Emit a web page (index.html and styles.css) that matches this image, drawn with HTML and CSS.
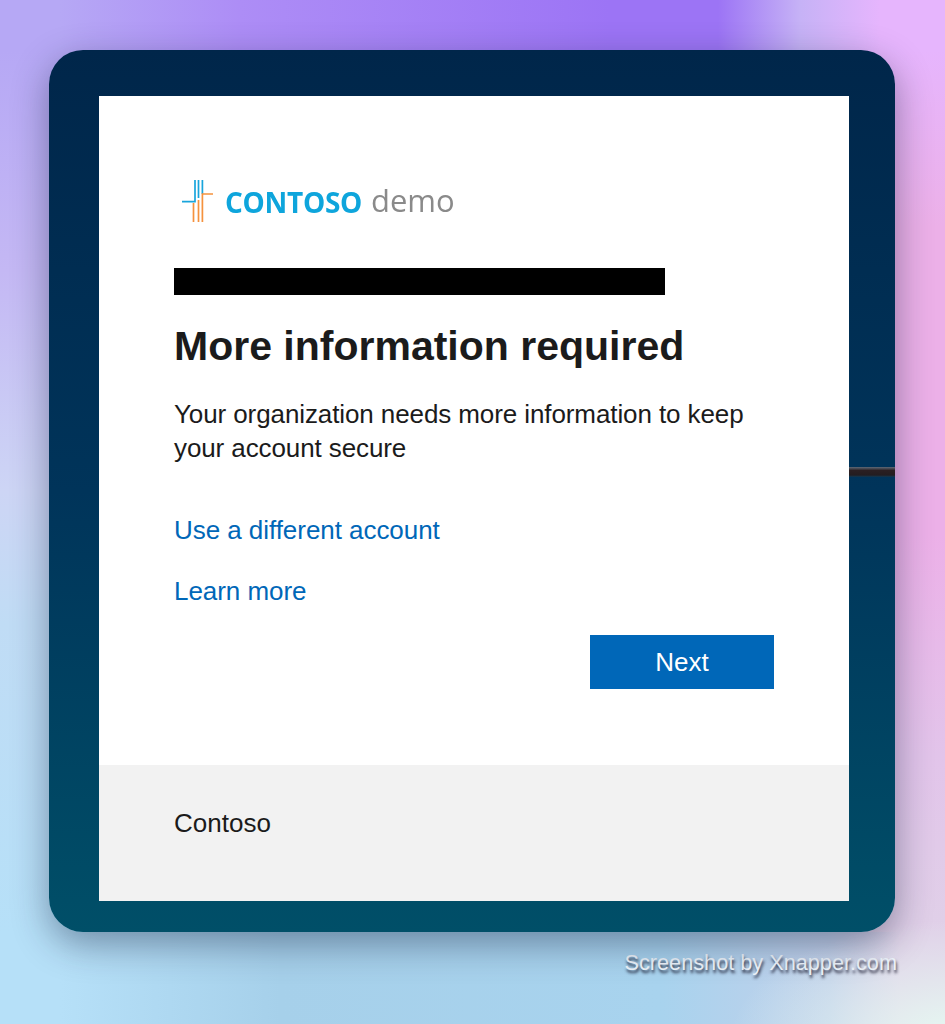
FILE: index.html
```html
<!DOCTYPE html>
<html lang="en">
<head>
<meta charset="utf-8">
<title>More information required</title>
<link rel="stylesheet" href="styles.css">
</head>
<body>
<main class="page">
  <section class="window">
    <div class="streak"></div>
    <div class="card">
      <div class="content">
        <div class="logo">
          <svg class="logo-mark" width="32" height="43" viewBox="0 0 32 43" fill="none" stroke-width="1.7">
            <path d="M0 21.7H13V0M16.5 0V18M20.4 0V14" stroke="#19a5dc"/>
            <path d="M31 14H20.4V42M16.5 42V20M11.5 42V23" stroke="#f5923e"/>
          </svg>
          <span class="logo-brand">CONTOSO</span>
          <span class="logo-demo">demo</span>
        </div>
        <div class="redaction"></div>
        <h1 class="title">More information required</h1>
        <p class="desc">Your organization needs more information to keep your account secure</p>
        <a class="link link-first" href="#">Use a different account</a>
        <a class="link link-second" href="#">Learn more</a>
        <div class="actions"><button class="next" type="button">Next</button></div>
      </div>
      <footer class="foot">Contoso</footer>
    </div>
  </section>
  <div class="credit">Screenshot by Xnapper.com</div>
</main>
</body>
</html>
```
FILE: styles.css
```css
* { box-sizing: border-box; }
html, body { margin: 0; padding: 0; height: 100%; }
body {
  font-family: "Liberation Sans", Arial, sans-serif;
  overflow: hidden;
}
.page {
  width: 945px;
  height: 1024px;
  padding: 50px 50px 0 49px;
  display: flex;
  flex-direction: column;
  background-color: #c0c8f5;
  background-repeat: no-repeat;
  background-image:
    radial-gradient(ellipse 230px 120px at 960px 1040px, #e6faf2 0%, rgba(230,250,242,0) 100%),
    linear-gradient(90deg, #b6a8f5 0, #b6a8f5 60px, #ad8df6 240px, #9c74f5 610px, #9c74f5 718px, #c6b2f6 800px, #e6b5fd 880px),
    linear-gradient(90deg, #b6e0f8 0, #b6e0f8 60px, #a6d0ea 280px, #a8d3ee 660px, #c2d0ea 830px, #e0d0e8 900px),
    linear-gradient(180deg, #e6b5fd 0%, #ecb0e8 20%, #ecb0e8 55%, #e2c4ea 80%, #e0d0e8 100%),
    linear-gradient(180deg, #b6a8f5 0%, #c4b8f4 25%, #cdd5f5 50%, #c0dcf5 65%, #b6e0f8 100%);
  background-size: 100% 100%, 945px 50px, 945px 92px, 100px 882px, 100px 882px;
  background-position: 0 0, 0 0, 0 932px, 845px 50px, 0 50px;
}
.window {
  position: relative;
  width: 846px;
  height: 882px;
  flex: none;
  padding: 46px 46px 31px 50px;
  border-radius: 34px;
  background: linear-gradient(180deg, #00264a 0%, #00345a 50%, #004f68 100%);
  box-shadow: 0 12px 36px rgba(20, 30, 60, 0.42);
}
.streak {
  position: absolute;
  right: 0;
  top: 417px;
  width: 46px;
  height: 10px;
  background: linear-gradient(180deg, #5e6a78 0%, #2a1f22 35%, #241d20 80%, #103a55 100%);
}
.card {
  position: relative;
  height: 805px;
  background: #fff;
  display: flex;
  flex-direction: column;
}
.content {
  flex: 1;
  padding: 84px 75px 0;
  display: flex;
  flex-direction: column;
  align-items: flex-start;
}
.logo {
  display: flex;
  align-items: center;
  height: 43px;
  padding-left: 8px;
  filter: blur(0.45px);
}
.logo-mark { margin-right: 11px; flex: none; }
.logo-brand {
  font-family: "Open Sans", sans-serif;
  font-weight: 700;
  font-size: 28px;
  color: #0ea5dc;
  letter-spacing: -0.3px;
}
.logo-demo {
  font-family: "Open Sans", sans-serif;
  font-size: 31px;
  line-height: 41px;
  color: #8a8a8a;
  margin-left: 9px;
  margin-bottom: 2px;
}
.redaction {
  width: 491px;
  height: 27px;
  margin-top: 45px;
  background: #000;
}
.title {
  margin: 27px 0 0;
  font-size: 41px;
  line-height: 48px;
  font-weight: 700;
  color: #1b1b1b;
}
.desc {
  width: 600px;
  margin: 27px 0 0;
  font-size: 26px;
  line-height: 34px;
  letter-spacing: -0.1px;
  color: #1b1b1b;
}
.link {
  display: block;
  font-size: 26px;
  line-height: 34px;
  letter-spacing: -0.05px;
  color: #0067b8;
  text-decoration: none;
}
.link-first { margin-top: 48px; }
.link-second { margin-top: 27px; }
.actions {
  align-self: stretch;
  display: flex;
  justify-content: flex-end;
  margin-top: 27px;
}
.next {
  width: 184px;
  height: 54px;
  border: 0;
  background: #0067b8;
  color: #fff;
  font: 26px "Liberation Sans", Arial, sans-serif;
}
.foot {
  height: 136px;
  padding: 41px 75px 0;
  background: #f2f2f2;
  font-size: 26px;
  line-height: 34px;
  color: #1b1b1b;
}
.credit {
  align-self: flex-end;
  margin-top: 18px;
  margin-right: -2px;
  font-size: 21.7px;
  line-height: 26px;
  color: #eef4fa;
  text-shadow: 1px 3px 3px rgba(20, 20, 40, 0.85);
}
```
